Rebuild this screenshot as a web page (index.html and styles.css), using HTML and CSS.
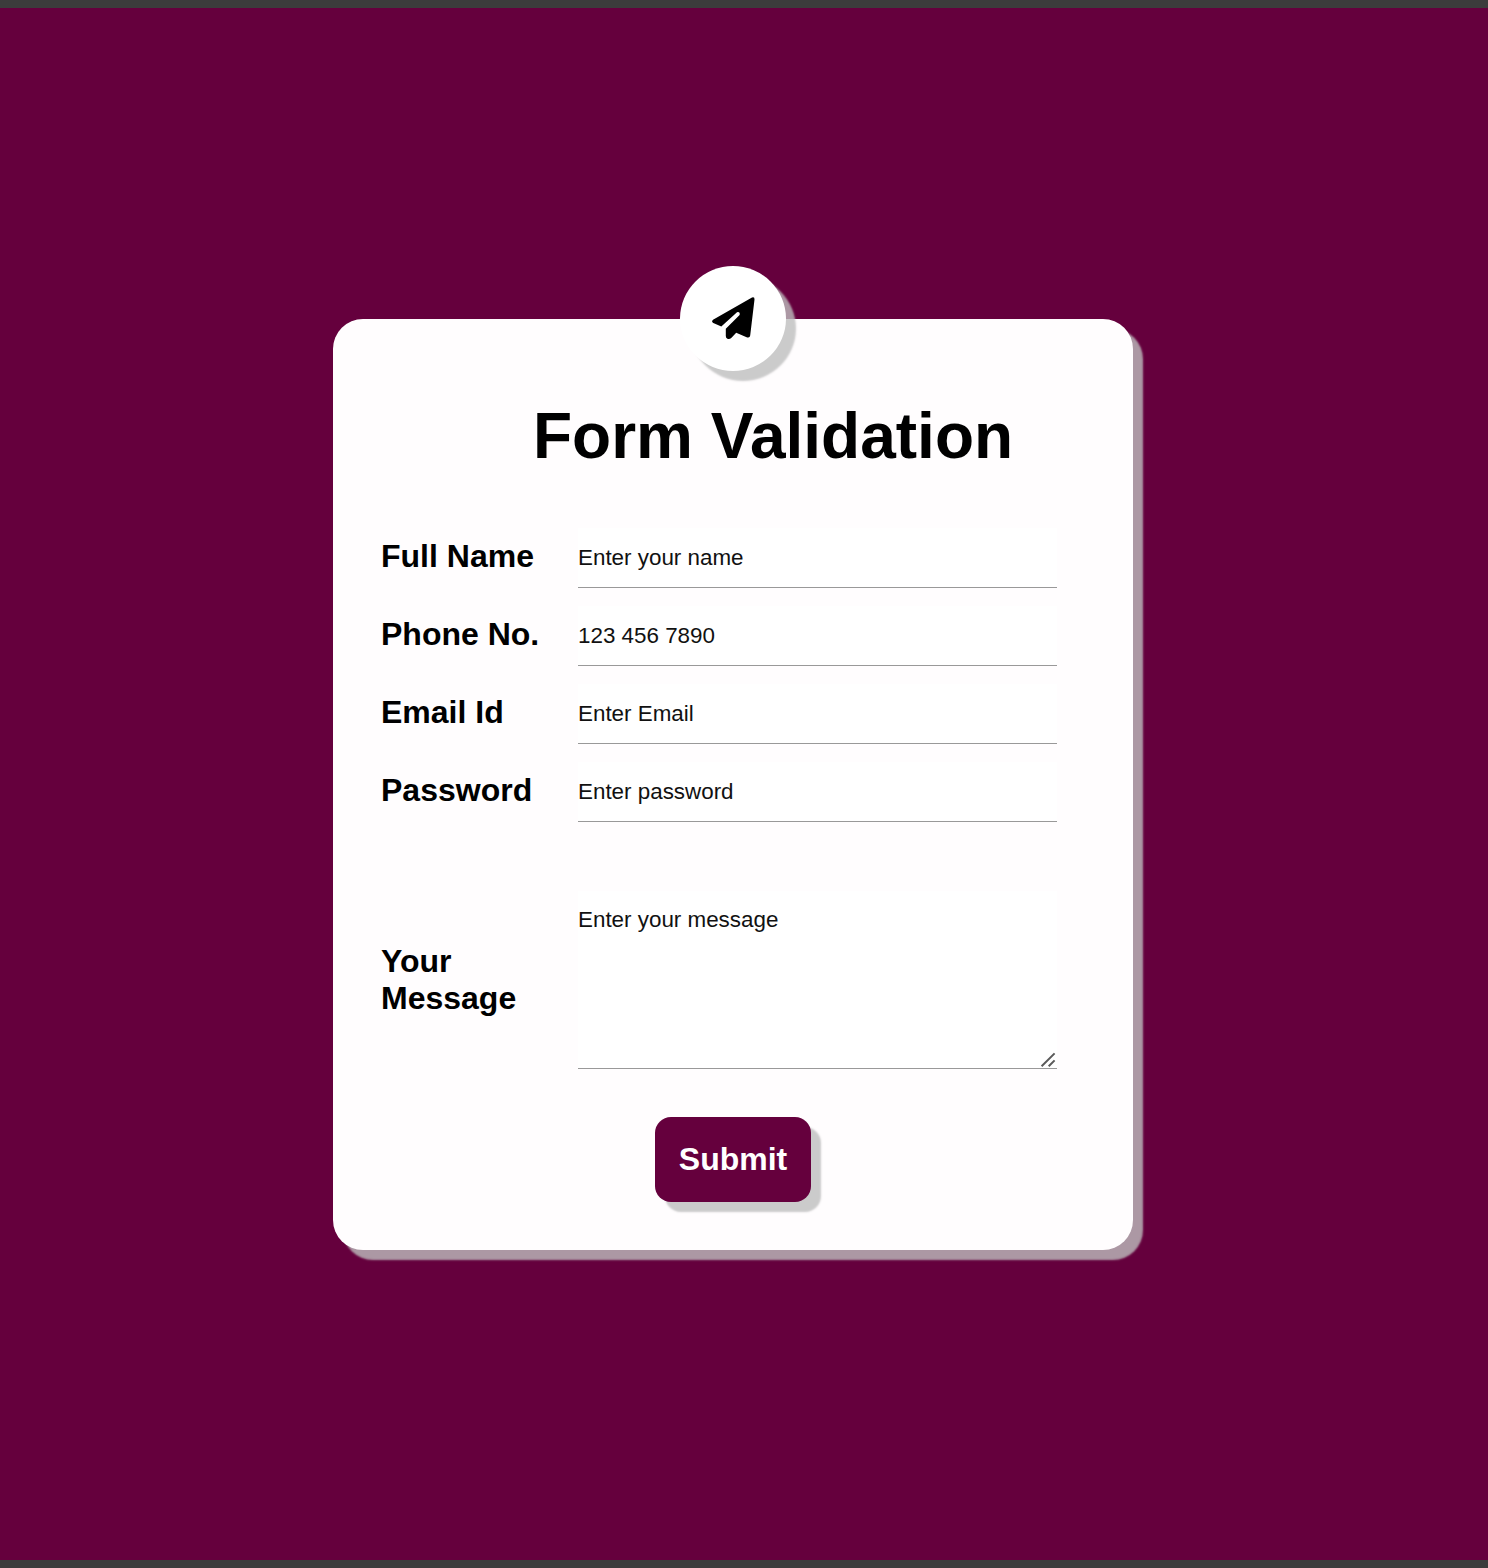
FILE: index.html
```html
<!DOCTYPE html>
<html lang="en">
<head>
<meta charset="utf-8">
<title>Form Validation</title>
<link rel="stylesheet" href="styles.css">
</head>
<body>
<main class="page">
  <form class="card">
    <div class="badge">
      <svg class="badge-icon" viewBox="0 0 56 56" aria-hidden="true"><path d="M46 7.4Q48.7 6.4 48.5 9.5L44.2 45.5Q43.8 48.2 41.2 47.4L30.2 42.8 25.5 47.8Q23.6 49.5 21.4 48.8Q19.8 48.2 19.8 46V38.8L33.6 25Q34.4 21.6 31 22.2L15.3 36.4 7.3 33Q5 31.6 7 29.8Z"/></svg>
    </div>
    <h1 class="title">Form Validation</h1>
    <div class="row">
      <label class="label" for="name">Full Name</label>
      <input class="field" id="name" type="text" placeholder="Enter your name">
    </div>
    <div class="row">
      <label class="label" for="phone">Phone No.</label>
      <input class="field" id="phone" type="tel" placeholder="123 456 7890">
    </div>
    <div class="row">
      <label class="label" for="email">Email Id</label>
      <input class="field" id="email" type="email" placeholder="Enter Email">
    </div>
    <div class="row">
      <label class="label" for="password">Password</label>
      <input class="field" id="password" type="password" placeholder="Enter password">
    </div>
    <div class="row row-message">
      <label class="label label-message" for="message">Your Message</label>
      <textarea class="field field-message" id="message" placeholder="Enter your message"></textarea>
      <svg class="grip" viewBox="0 0 16 16" aria-hidden="true"><path d="M1.6 14.2L14.6 1.4M8.7 14.2L14.6 8.4"/></svg>
    </div>
    <button class="submit" type="button">Submit</button>
  </form>
</main>
</body>
</html>
```

FILE: styles.css
```css
* {
  box-sizing: border-box;
  margin: 0;
  padding: 0;
}

body {
  font-family: "Liberation Sans", Arial, sans-serif;
  color: #000;
  background: #65003d;
}

.page {
  height: 1568px;
  padding-top: 311px;
  border-top: 8px solid #3c3c3c;
  border-bottom: 8px solid #3c3c3c;
}

.card {
  position: relative;
  display: flex;
  flex-direction: column;
  width: 800px;
  height: 931px;
  margin-left: 333px;
  padding: 80px 76px 48px 48px;
  border-radius: 30px;
  background: #fffdfe;
  box-shadow: 10px 10px 2px rgba(190, 190, 190, 0.8);
}

.badge {
  position: absolute;
  top: -53px;
  left: 347px;
  display: flex;
  align-items: center;
  justify-content: center;
  width: 106px;
  height: 105px;
  border-radius: 50%;
  background: #fff;
  box-shadow: 10px 10px 2px rgba(190, 190, 190, 0.8);
}

.badge-icon {
  width: 56px;
  height: 56px;
  margin: 0 0 1px 1px;
}

.title {
  margin: 0 0 55px 152px;
  font-size: 64px;
  line-height: 74px;
}

.row {
  position: relative;
  display: flex;
  align-items: center;
  margin-bottom: 18px;
}

.label {
  width: 197px;
  padding: 0 30px 4px 0;
  font-size: 32px;
  font-weight: bold;
  line-height: 37px;
}

.label-message {
  padding-bottom: 0;
}

.field {
  width: 479px;
  height: 60px;
  border: 0;
  border-bottom: 1px solid #999;
  outline: 0;
  background: #fff;
  font-family: inherit;
  font-size: 22.4px;
}

.field::placeholder {
  color: #111;
  opacity: 1;
}

.row-message {
  margin: 51px 0 48px;
}

.field-message {
  height: 178px;
  padding-top: 16px;
  resize: none;
}

.grip {
  position: absolute;
  right: 1px;
  bottom: 1px;
  width: 16px;
  height: 16px;
  fill: none;
  stroke: #5a5a5a;
  stroke-width: 2;
}

.submit {
  width: 156px;
  height: 85px;
  margin-left: 274px;
  border: 0;
  border-radius: 16px;
  background: #65003d;
  box-shadow: 10px 10px 2px rgba(190, 190, 190, 0.8);
  color: #fff;
  font-family: inherit;
  font-size: 32px;
  font-weight: bold;
}
```
